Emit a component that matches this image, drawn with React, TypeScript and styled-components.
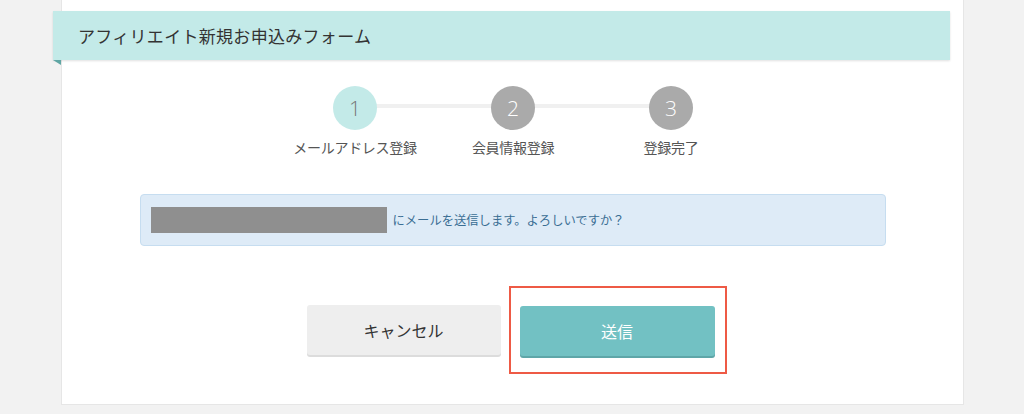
import React from 'react';
import styled, { createGlobalStyle } from 'styled-components';

const GlobalStyle = createGlobalStyle`
  html, body {
    margin: 0;
    padding: 0;
    background: #f2f2f2;
  }
  body {
    font-family: "Lato", "Noto Sans CJK JP", sans-serif;
    color: #333;
  }
`;

type StepData = {
  no: number;
  label: string;
  active?: boolean;
};

const steps: StepData[] = [
  { no: 1, label: 'メールアドレス登録', active: true },
  { no: 2, label: '会員情報登録' },
  { no: 3, label: '登録完了' },
];

const App = () => {
  return (
    <>
      <GlobalStyle />
      <Page>
        <Card>
          <Heading>
            <HeadingText>アフィリエイト新規お申込みフォーム</HeadingText>
          </Heading>
          <Steps>
            {steps.map((s, i) => (
              <Step key={s.no} $last={i === steps.length - 1}>
                <Circle $active={s.active}>{s.no}</Circle>
                <StepLabel>{s.label}</StepLabel>
              </Step>
            ))}
          </Steps>
          <Notice>
            <Masked />
            <NoticeText>にメールを送信します。よろしいですか？</NoticeText>
          </Notice>
          <ButtonRow>
            <CancelButton type="button">キャンセル</CancelButton>
            <Highlight>
              <SubmitButton type="button">送信</SubmitButton>
            </Highlight>
          </ButtonRow>
        </Card>
      </Page>
    </>
  );
};

const Page = styled.div`
  width: 1024px;
  height: 414px;
  overflow: hidden;
`;

const Card = styled.div`
  box-sizing: border-box;
  margin-left: 61px;
  width: 903px;
  background: #fff;
  border: 1px solid #e6e6e6;
  border-top: none;
  padding: 11px 0 30px;
  display: flex;
  flex-direction: column;
  align-items: center;
`;

const Heading = styled.div`
  position: relative;
  align-self: flex-start;
  box-sizing: border-box;
  margin-left: -9px;
  width: 897px;
  height: 49px;
  background: #c3eae8;
  box-shadow: 0 1px 2px rgba(0, 0, 0, 0.12);
  display: flex;
  align-items: center;
  padding-left: 25px;

  &::after {
    content: '';
    position: absolute;
    left: 0;
    bottom: -5px;
    border-top: 5px solid #5fa6a4;
    border-left: 8px solid transparent;
  }
`;

const HeadingText = styled.h1`
  margin: 0;
  font-family: "Noto Sans CJK JP", sans-serif;
  font-size: 17px;
  font-weight: 400;
  color: #333;
  letter-spacing: 0.3px;
`;

const Steps = styled.div`
  display: grid;
  grid-template-columns: repeat(3, 158px);
  margin-top: 26px;
  margin-left: 1px;
`;

const Step = styled.div<{ $last?: boolean }>`
  position: relative;
  display: flex;
  flex-direction: column;
  align-items: center;

  &::after {
    content: '';
    display: ${(p) => (p.$last ? 'none' : 'block')};
    position: absolute;
    top: 18px;
    left: 50%;
    width: 158px;
    height: 4px;
    background: #f0f0f0;
    z-index: 0;
  }
`;

const Circle = styled.div<{ $active?: boolean }>`
  position: relative;
  z-index: 1;
  width: 44px;
  height: 44px;
  border-radius: 50%;
  background: ${(p) => (p.$active ? '#c3eae8' : '#aaaaaa')};
  color: ${(p) => (p.$active ? '#777' : '#fff')};
  font-family: "Open Sans", "Lato", sans-serif;
  font-weight: 300;
  font-size: 21px;
  display: flex;
  align-items: center;
  justify-content: center;
`;

const StepLabel = styled.div`
  margin-top: 7px;
  font-family: "Noto Sans CJK JP", sans-serif;
  font-size: 14px;
  line-height: 20px;
  color: #555;
  white-space: nowrap;
  letter-spacing: -0.3px;
`;

const Notice = styled.div`
  box-sizing: border-box;
  margin-top: 37px;
  width: 746px;
  height: 52px;
  background: #deebf7;
  border: 1px solid #c6ddf0;
  border-radius: 4px;
  display: flex;
  align-items: center;
  padding-left: 10px;
  gap: 6px;
`;

const Masked = styled.div`
  width: 236px;
  height: 26px;
  background: #8f8f8f;
`;

const NoticeText = styled.span`
  font-family: "Noto Sans CJK JP", sans-serif;
  font-size: 12.3px;
  color: #3a6e94;
`;

const ButtonRow = styled.div`
  margin-top: 40px;
  display: flex;
  align-items: center;
  gap: 8px;
  margin-left: 8px;
`;

const BaseButton = styled.button`
  width: 194px;
  height: 50px;
  border: none;
  border-radius: 3px;
  font-family: "Noto Sans CJK JP", sans-serif;
  font-size: 16px;
  font-weight: 400;
  cursor: pointer;
  padding: 0;
`;

const CancelButton = styled(BaseButton)`
  background: #eeeeee;
  color: #333;
  box-shadow: 0 2px 0 #dcdcdc;
`;

const SubmitButton = styled(BaseButton)`
  width: 195px;
  background: #72c1c3;
  color: #fff;
  box-shadow: 0 2px 0 #5ea6a8;
`;

const Highlight = styled.div`
  box-sizing: border-box;
  width: 218px;
  height: 88px;
  border: 2px solid #ee5a45;
  padding: 18px 0 0 9px;
`;

export default App;
